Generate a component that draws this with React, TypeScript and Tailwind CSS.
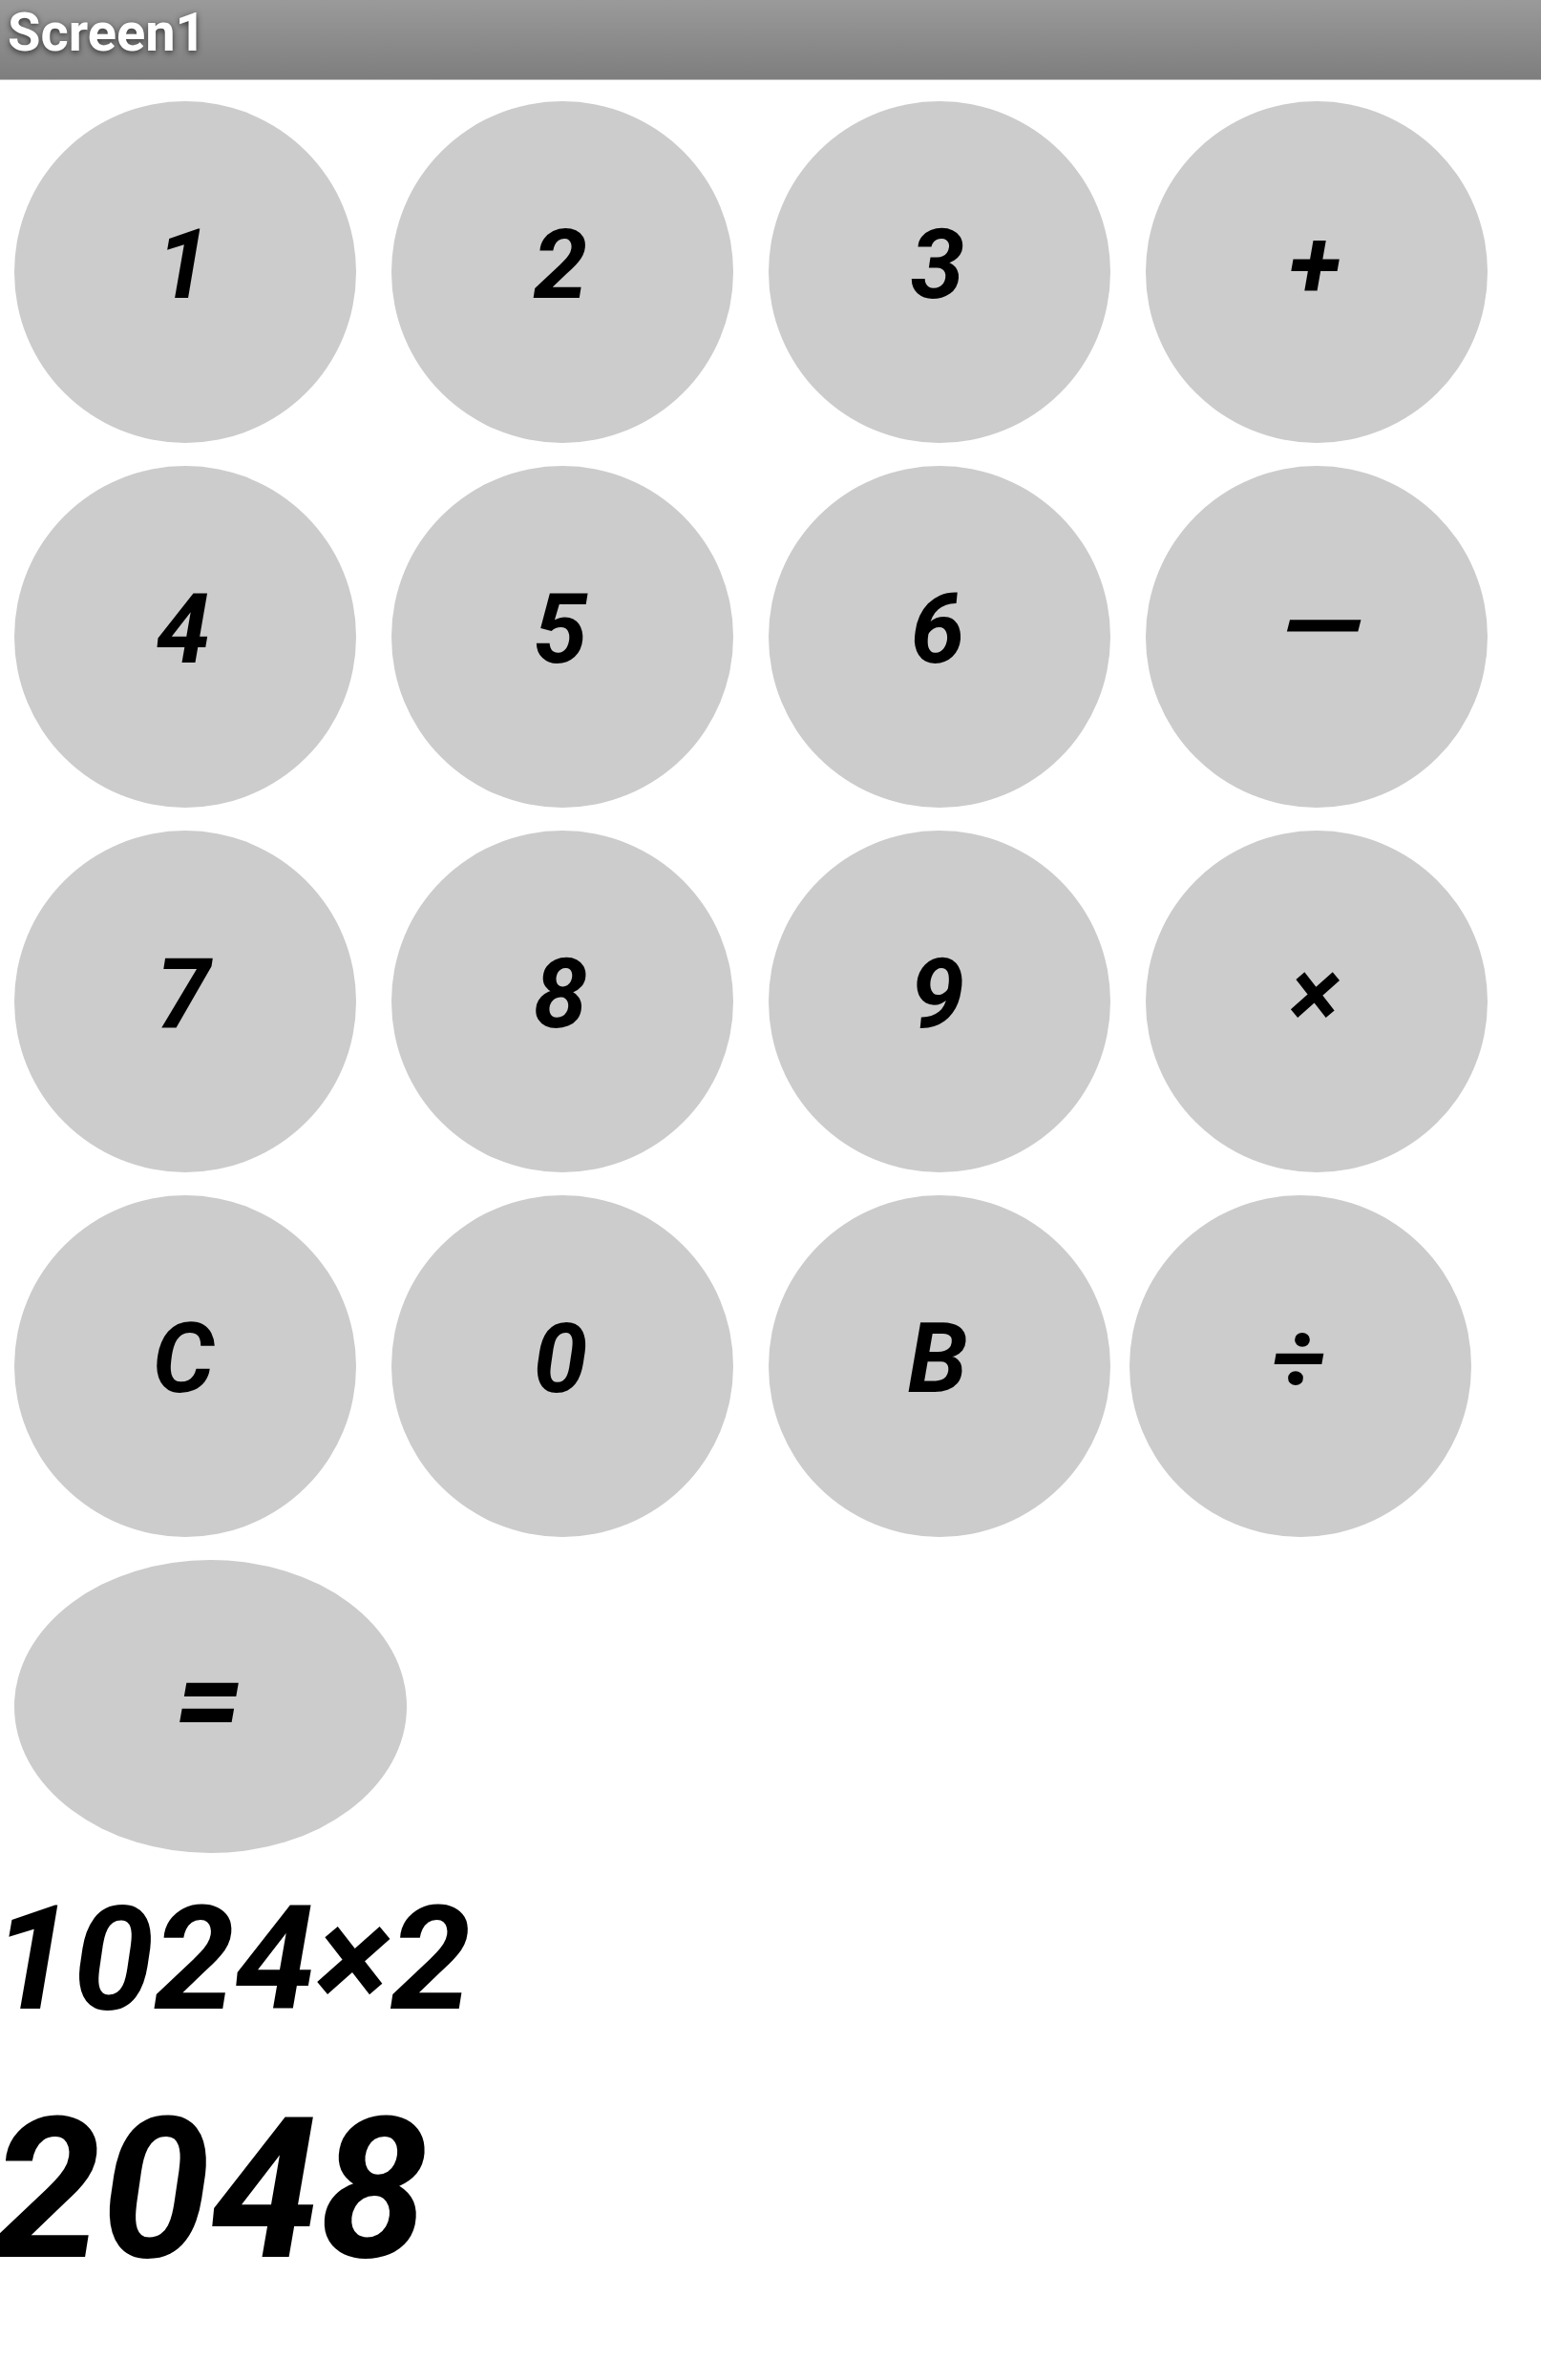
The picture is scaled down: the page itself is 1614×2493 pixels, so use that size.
const rows = [
  ['1', '2', '3', '+'],
  ['4', '5', '6', '－'],
  ['7', '8', '9', '×'],
  ['C', '0', 'B', '÷'],
];

export default function App() {
  return (
    <div className="min-h-screen overflow-hidden bg-white text-black font-['Roboto','Noto_Sans_CJK_JP',sans-serif]">
      <header className="flex h-[84px] items-center border-b border-[#bbb] bg-linear-to-b from-[#9a9a9a] to-[#7e7e7e] px-2 pb-4">
        <h1 className="text-[56px] leading-[64px] font-bold text-white [text-shadow:0_2px_6px_#333]">Screen1</h1>
      </header>
      <main className="pt-[22px]">
        <div className="flex flex-col gap-6 pl-[15px]">
          {rows.map((row, r) => (
            <div key={r} className="flex">
              {row.map((k, i) => (
                <button
                  key={k}
                  className={`flex size-[358px] shrink-0 items-center justify-center rounded-full bg-[#ccc] pr-1 pb-4 text-[102px] leading-none font-bold italic ${i === 3 ? '' : r === 3 && i === 2 ? 'mr-5' : 'mr-[37px]'} ${k === '－' ? '[-webkit-text-stroke:2px_black]' : ''}`}
                >
                  {k}
                </button>
              ))}
            </div>
          ))}
          <button className="flex h-[307px] w-[411px] items-center justify-center rounded-[50%] bg-[#ccc] pr-1 pb-4 text-[128px] leading-none font-bold italic">
            =
          </button>
        </div>
        <div className="-ml-2 flex flex-col gap-8 pt-[21px]">
          <output className="text-[152px] leading-[180px] font-bold italic">1024×2</output>
          <output className="text-[205px] leading-[240px] font-bold italic">2048</output>
        </div>
      </main>
    </div>
  );
}
